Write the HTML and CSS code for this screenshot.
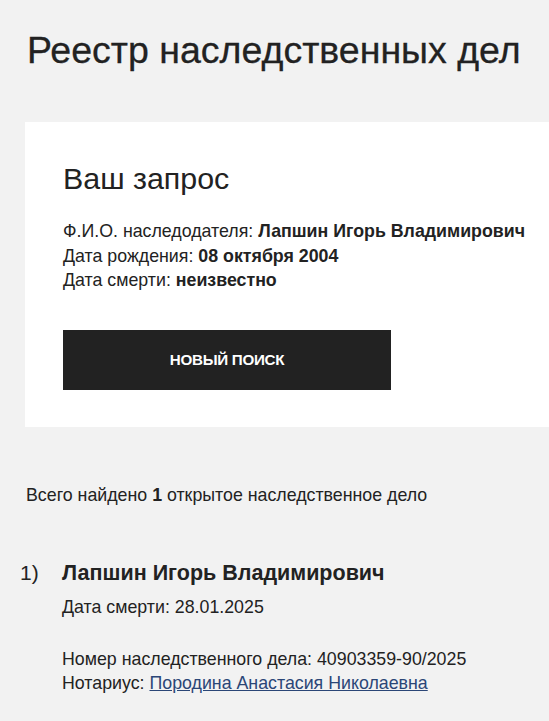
FILE: index.html
```html
<!DOCTYPE html>
<html lang="ru">
<head>
<meta charset="utf-8">
<link rel="stylesheet" href="styles.css">
</head>
<body>
<main class="page">
  <h1 class="page-title">Реестр наследственных дел</h1>
  <section class="card">
    <h2 class="card-title">Ваш запрос</h2>
    <div class="query">
      <div>Ф.И.О. наследодателя: <b>Лапшин Игорь Владимирович</b></div>
      <div>Дата рождения: <b>08 октября 2004</b></div>
      <div>Дата смерти: <b>неизвестно</b></div>
    </div>
    <button class="btn">НОВЫЙ ПОИСК</button>
  </section>
  <p class="summary">Всего найдено <b>1</b> открытое наследственное дело</p>
  <ol class="results">
    <li class="result">
      <span class="num">1)</span>
      <div class="result-body">
        <div class="result-name">Лапшин Игорь Владимирович</div>
        <div class="result-line">Дата смерти: 28.01.2025</div>
        <div class="result-info">
          <div>Номер наследственного дела: 40903359-90/2025</div>
          <div>Нотариус: <a href="#" class="link">Породина Анастасия Николаевна</a></div>
        </div>
      </div>
    </li>
  </ol>
</main>
</body>
</html>
```
FILE: styles.css
```css
html, body {
  margin: 0;
  padding: 0;
  background: #f2f2f2;
  color: #222;
  font-family: "Liberation Sans", Arial, sans-serif;
}
.page {
  padding: 0 0 0 25px;
}
.page-title {
  margin: 0;
  padding: 28px 0 0 2px;
  font-size: 37.5px;
  font-weight: normal;
  line-height: 44px;
  color: #222;
  -webkit-text-stroke: 0.3px #222;
}
.card {
  margin-top: 50px;
  background: #fff;
  padding: 38px 0 37px 38px;
}
.card-title {
  margin: 0;
  font-size: 30.4px;
  font-weight: normal;
  line-height: 36px;
}
.query {
  margin-top: 23px;
  font-size: 17.8px;
  line-height: 24.5px;
}
.query b { font-weight: bold; }
.btn {
  margin-top: 37px;
  width: 328px;
  height: 60px;
  background: #222;
  color: #fff;
  border: 0;
  font-family: "Liberation Sans", Arial, sans-serif;
  font-weight: bold;
  font-size: 15.2px;
  letter-spacing: -0.3px;
  display: block;
}
.summary {
  margin: 56px 0 0 1px;
  font-size: 17.8px;
  line-height: 24px;
}
.results {
  list-style: none;
  margin: 50px 0 0 0;
  padding: 0;
}
.result {
  display: flex;
}
.num {
  width: 42px;
  margin-left: -5px;
  font-size: 21px;
  line-height: 32px;
  font-weight: normal;
}
.result-name {
  font-size: 21.5px;
  font-weight: bold;
  line-height: 32px;
}
.result-line {
  margin-top: 6px;
  font-size: 17.8px;
  line-height: 24px;
}
.result-info {
  margin-top: 28px;
  font-size: 17.8px;
  line-height: 24px;
}
.link {
  color: #2b4677;
  text-decoration: underline;
}
```
